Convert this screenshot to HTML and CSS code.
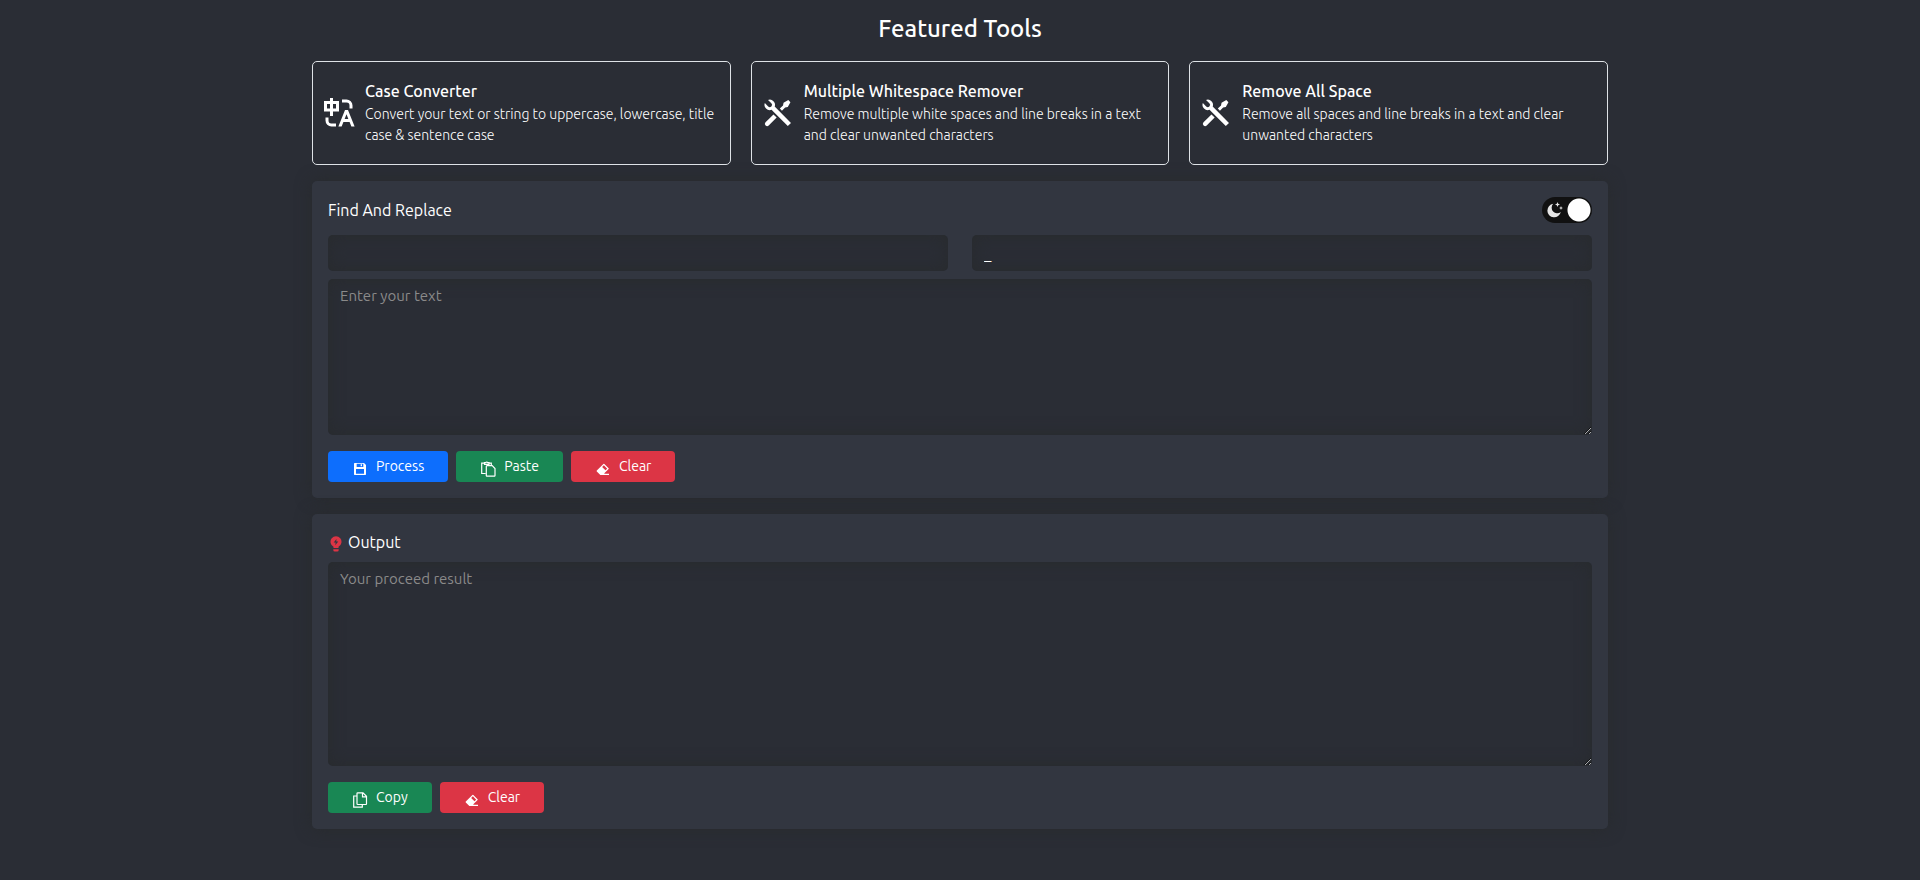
FILE: index.html
```
<!DOCTYPE html>
<html lang="en">
    <head>
        <meta charset="UTF-8">
        <meta name="viewport" content="width=device-width, initial-scale=1">
        <title>Find And Replace</title>
        <link rel="stylesheet" href="styles.css">
    </head>

    <body>
        <!-- shared icons -->
        <svg class="sprite" aria-hidden="true">
            <symbol id="i-tools" viewBox="0 0 24 24">
                <path d="M5.33 3.27a3.5 3.5 0 0 1 4.47 4.47L20.65 18.6l-2.12 2.12L7.68 9.87a3.5 3.5 0 0 1-4.47-4.48l2.24 2.24A1.5 1.5 0 1 0 7.57 5.5L5.33 3.27zm10.37 1.88 3.18-1.77 1.41 1.42-1.77 3.18-1.77.35-2.12 2.12-1.41-1.41 2.12-2.12.36-1.77zm-6.72 7.78 2.12 2.12-5.3 5.3a1.5 1.5 0 0 1-2.22-2.01l.1-.11 5.3-5.3z"/>
            </symbol>
            <symbol id="i-eraser" viewBox="0 0 24 24">
                <path d="M14 19h7v2h-9l-3.99.01-5.3-5.3a1 1 0 0 1 0-1.42L12.6 4.4a1 1 0 0 1 1.42 0l6.36 6.36a1 1 0 0 1 0 1.41L14 18.56V19zm1.66-4.95 2.6-2.6-4.95-4.95-2.6 2.6 4.95 4.95z"/>
            </symbol>
        </svg>

        <div class="container">
            <h1 class="page-title">Featured Tools</h1>

            <div class="tools">
                <a class="tool" href="#case-converter">
                    <svg class="tool-icon" viewBox="0 0 24 24"><path d="M5 15v2a2 2 0 0 0 1.85 1.99L7 19h3v2H7a4 4 0 0 1-4-4v-2h2zm13-5 4.4 11h-2.15l-1.2-3h-4.1l-1.2 3h-2.15L16 10h2zm-1 2.89L15.75 16h2.5L17 12.89zM8 2v2h4v7H8v3H6v-3H2V4h4V2h2zm9 1a4 4 0 0 1 4 4v2h-2V7a2 2 0 0 0-2-2h-3V3h3zM6 6H4v3h2V6zm4 0H8v3h2V6z"/></svg>
                    <div>
                        <h2 class="tool-name">Case Converter</h2>
                        <p class="tool-text">Convert your text or string to uppercase, lowercase, title case &amp; sentence case</p>
                    </div>
                </a>
                <a class="tool" href="#whitespace-remover">
                    <svg class="tool-icon"><use href="#i-tools"/></svg>
                    <div>
                        <h2 class="tool-name">Multiple Whitespace Remover</h2>
                        <p class="tool-text">Remove multiple white spaces and line breaks in a text and clear unwanted characters</p>
                    </div>
                </a>
                <a class="tool" href="#remove-space">
                    <svg class="tool-icon"><use href="#i-tools"/></svg>
                    <div>
                        <h2 class="tool-name">Remove All Space</h2>
                        <p class="tool-text">Remove all spaces and line breaks in a text and clear unwanted characters</p>
                    </div>
                </a>
            </div>

            <section class="panel">
                <div class="panel-head">
                    <h2 class="panel-title"><label for="text">Find And Replace</label></h2>
                    <label class="switch">
                        <input type="checkbox" class="switch-input" aria-label="Dark mode" checked>
                        <svg class="moon" viewBox="0 0 16 16"><path d="M6.200 1.800A5.600 5.600 0 0 0 13.800 10 6.800 6.800 0 1 1 6.200 1.800z"/><path d="M10.500 0l.7 1.800L13 2.500l-1.800.7-.7 1.800-.7-1.800L8 2.500l1.800-.7zM14 4l.6 1.400L16 6l-1.400.6L14 8l-.6-1.400L12 6l1.400-.6z"/></svg>
                    </label>
                </div>
                <div class="fields">
                    <input type="text" class="field" aria-label="Find">
                    <input type="text" class="field" aria-label="Replace" value="_">
                </div>
                <textarea id="text" class="field area" placeholder="Enter your text"></textarea>
                <div class="buttons">
                    <button type="button" class="btn blue">
                        <svg class="btn-icon" viewBox="0 0 24 24"><path fill-rule="evenodd" d="M4 3h14l3 3v14a1 1 0 0 1-1 1H4a1 1 0 0 1-1-1V4a1 1 0 0 1 1-1zM7 4v5h10V4H7zM6 12v7h12v-7H6zM13 5h2v3h-2z"/></svg>
                        Process
                    </button>
                    <button type="button" class="btn green">
                        <svg class="btn-icon line" viewBox="0 0 16 16"><path d="M5.500 12.500H1.700V2.200h2.800M9 2.200h2.300V4M4.500 3.300h4.500V1.700H7.700a1 1 0 0 0-1.900 0H4.500zM7 4.700h5.200l2.800 2.800v7a.7.7 0 0 1-.7.7H7a.7.7 0 0 1-.7-.7V5.400A.7.7 0 0 1 7 4.700z"/></svg>
                        Paste
                    </button>
                    <button type="button" class="btn red">
                        <svg class="btn-icon"><use href="#i-eraser"/></svg>
                        Clear
                    </button>
                </div>
            </section>

            <section class="panel output">
                <h2 class="panel-title">
                    <svg class="bulb" viewBox="0 0 16 16"><path fill-rule="evenodd" d="M5.500 12v-1.300a5.500 5.500 0 1 1 5 0V12zM8.500 3L5.700 6.500h2L7.200 9.200l3.100-3.700h-2zM5.300 13.300h5.400v.7a1.500 1.500 0 0 1-1.500 1.500H6.800A1.500 1.500 0 0 1 5.300 14z"/></svg>
                    <label for="result">Output</label>
                </h2>
                <textarea id="result" class="field area tall" placeholder="Your proceed result"></textarea>
                <div class="buttons">
                    <button type="button" class="btn green">
                        <svg class="btn-icon line" viewBox="0 0 16 16"><path d="M5 4H1.700v11.200h8.600V12.500M5.700.8H11l3.500 3.500v7.500a.7.7 0 0 1-.7.7H5.700a.7.7 0 0 1-.7-.7V1.500a.7.7 0 0 1 .7-.7zM10.500 1v3.800h4"/></svg>
                        Copy
                    </button>
                    <button type="button" class="btn red">
                        <svg class="btn-icon"><use href="#i-eraser"/></svg>
                        Clear
                    </button>
                </div>
            </section>
        </div>
    </body>
</html>
```
FILE: styles.css
```
* {
    box-sizing: border-box;
}

body {
    margin: 0;
    background-color: #2a2d35;
    color: #fff;
    font-family: Ubuntu, "Noto Sans", sans-serif;
    font-size: 14px;
    line-height: 21px;
}

h1, h2, p {
    margin: 0;
    font-weight: 400;
}

svg {
    fill: currentColor;
    flex-shrink: 0;
}

.sprite {
    display: none;
}

.container {
    max-width: 1320px;
    margin: 0 auto;
    padding: 14px 12px 32px;
}

.page-title {
    margin-bottom: 17px;
    font-size: 24px;
    font-weight: 500;
    line-height: 30px;
    text-align: center;
}

.tools {
    display: grid;
    grid-template-columns: repeat(3, 1fr);
    gap: 20px;
}

.tool {
    display: flex;
    align-items: center;
    gap: 8px;
    min-height: 104px;
    padding: 0 8px;
    border: 1px solid #dee2e6;
    border-radius: 5px;
    color: #fff;
    text-decoration: none;
}

.tool-icon {
    width: 36px;
    height: 36px;
}

.tool-name {
    margin-bottom: 2px;
    font-size: 16px;
    font-weight: 500;
    line-height: 22px;
}

.tool-text {
    font-weight: 300;
}

.panel {
    margin-top: 16px;
    padding: 16px;
    border-radius: 5px;
    background-color: #323640;
    box-shadow: 0 0 16px #282b2d;
}

.panel-head {
    display: flex;
    align-items: center;
    justify-content: space-between;
    margin-bottom: 12px;
}

.panel-title {
    display: flex;
    align-items: center;
    gap: 4px;
    font-size: 16px;
    line-height: 24px;
}

.switch {
    position: relative;
    display: flex;
    width: 50px;
    height: 26px;
}

.switch-input {
    appearance: none;
    width: 100%;
    height: 100%;
    margin: 0;
    border-radius: 13px;
    background: #111 radial-gradient(circle at center, #fff 11px, transparent 12px) -13px 0 no-repeat;
}

.switch-input:checked {
    background-position: 12px 0;
}

.moon {
    position: absolute;
    top: 5px;
    left: 5px;
    width: 16px;
    height: 16px;
    color: #e6e6e6;
    pointer-events: none;
}

.fields {
    display: grid;
    grid-template-columns: 1fr 1fr;
    gap: 24px;
    margin-bottom: 8px;
}

.field {
    width: 100%;
    height: 36px;
    padding: 6px 12px;
    border: 0;
    border-radius: 5px;
    outline: 0;
    background-color: #2a2d35;
    box-shadow: inset 0 0 16px #282b2d;
    color: #fff;
    font: inherit;
    font-size: 15px;
}

.field::placeholder {
    color: #8a8a8a;
}

.area {
    display: block;
    height: 156px;
    resize: vertical;
}

.tall {
    height: 204px;
}

.buttons {
    display: flex;
    gap: 8px;
    margin-top: 16px;
}

.btn {
    display: flex;
    align-items: center;
    gap: 8px;
    height: 31px;
    padding: 0 24px;
    border: 0;
    border-radius: 4px;
    color: #fff;
    font: inherit;
}

.blue {
    background-color: #0d6efd;
}

.green {
    background-color: #198754;
}

.red {
    background-color: #dc3545;
}

.btn-icon {
    width: 16px;
    height: 16px;
    margin-top: 4px;
}

.line {
    fill: none;
    stroke: currentColor;
    stroke-width: 1.2;
}

.output .panel-title {
    margin-bottom: 8px;
}

.bulb {
    width: 16px;
    height: 16px;
    margin-top: 4px;
    color: #dc3545;
}
```
